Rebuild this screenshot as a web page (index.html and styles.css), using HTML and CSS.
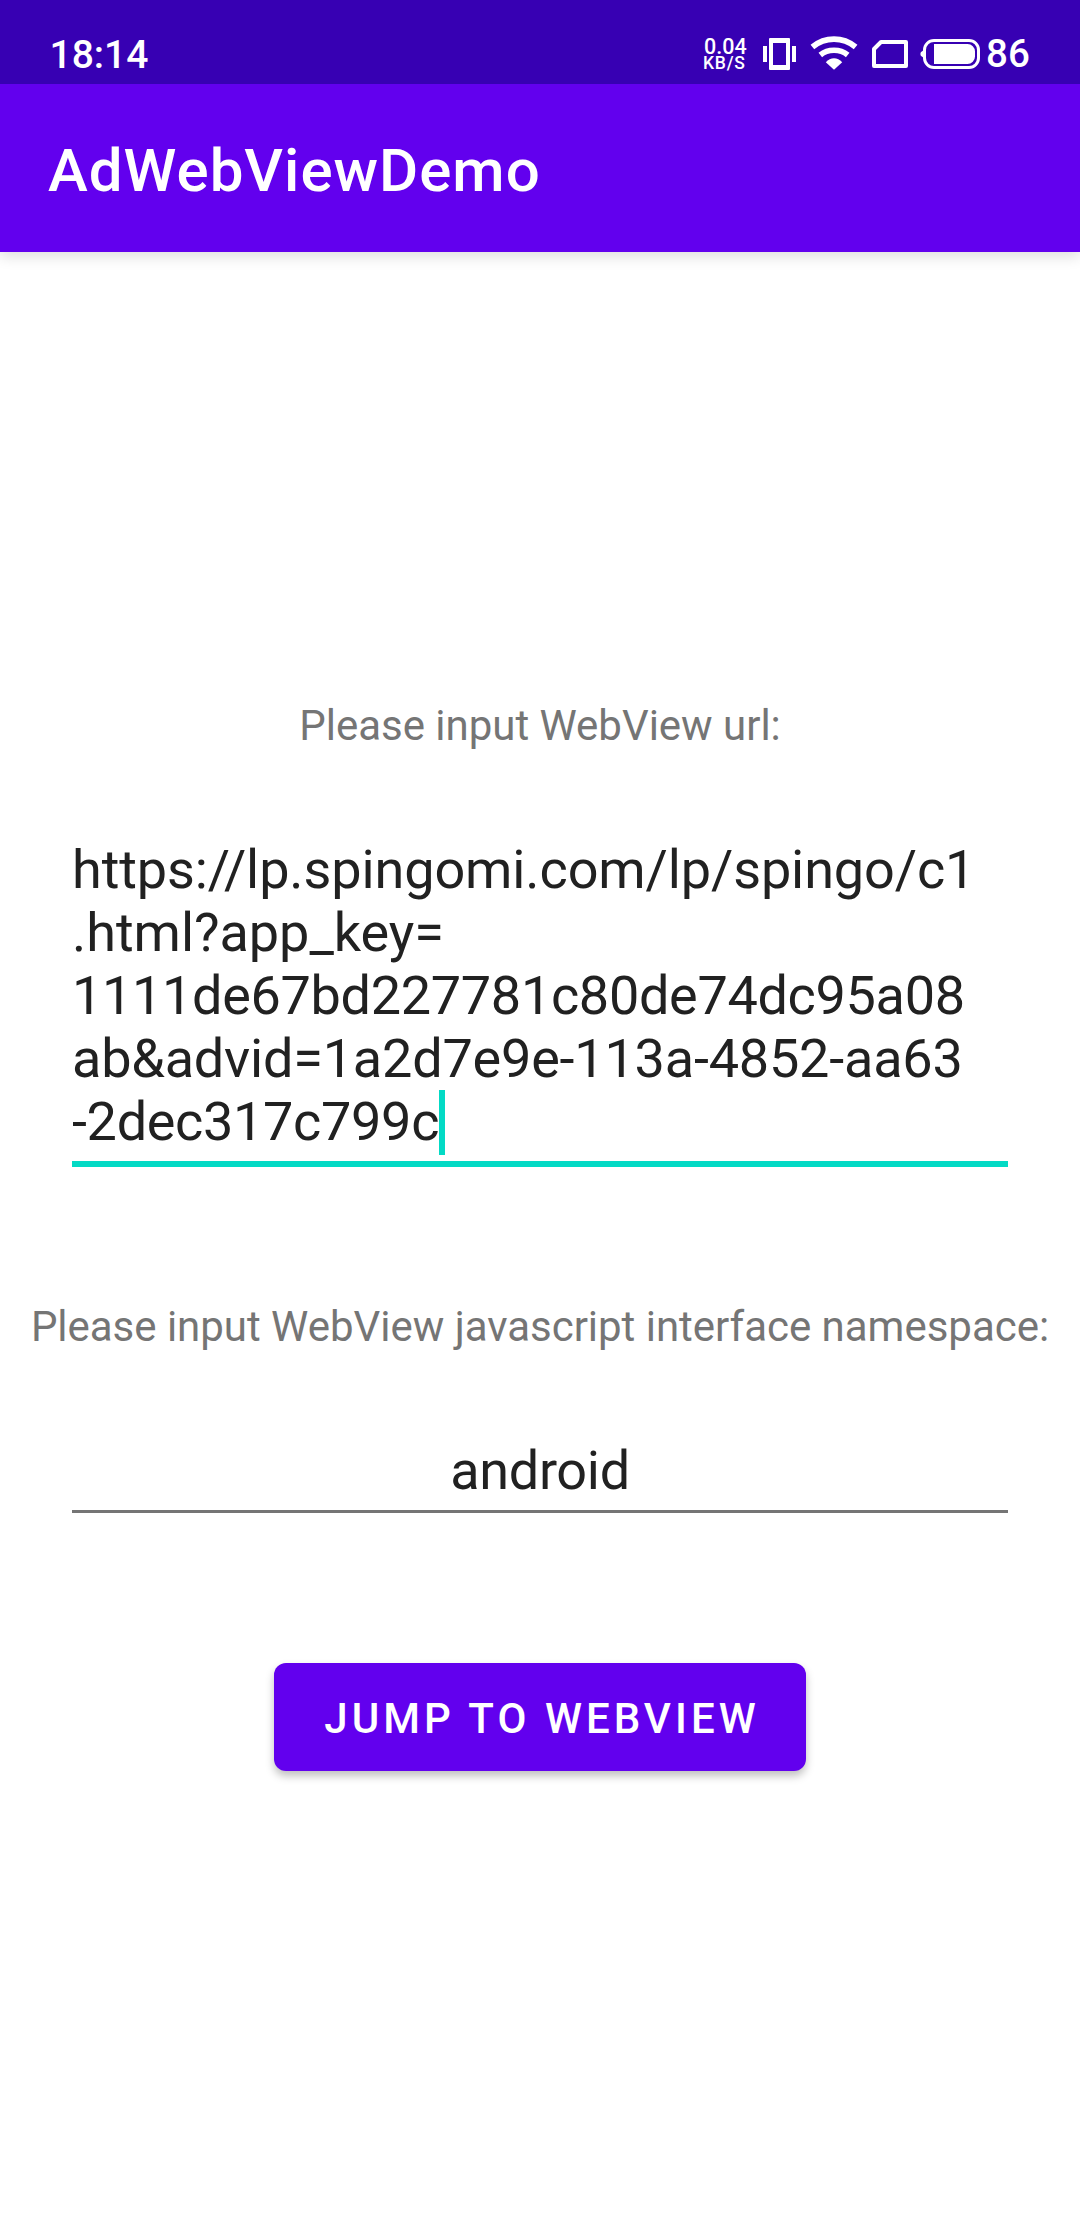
FILE: index.html
```
<!DOCTYPE html>
<html lang="en">
<head>
<meta charset="utf-8">
<title>AdWebViewDemo</title>
<link rel="stylesheet" href="styles.css">
</head>
<body>
<div class="status-bar">
  <span class="clock">18:14</span>
  <div class="net-speed">
    <span class="net-value">0.04</span>
    <span class="net-unit">KB/S</span>
  </div>
  <svg class="icon-vibrate" width="33" height="32" viewBox="0 0 33 32" fill="#fff">
    <path d="M0 8h4v16H0zM29 8h4v16h-4z"/>
    <path fill-rule="evenodd" d="M7 0h19a1 1 0 0 1 1 1v30a1 1 0 0 1-1 1H7a1 1 0 0 1-1-1V1a1 1 0 0 1 1-1zM10 5v22h13V5z"/>
  </svg>
  <svg class="icon-wifi" width="48" height="34" viewBox="0 0 48 34">
    <path d="M2.400 11Q12 3.200 24 3.200T45.600 11" fill="none" stroke="#fff" stroke-width="5.800"/>
    <path d="M10.300 19Q16 14.300 24 14.300T37.700 19" fill="none" stroke="#fff" stroke-width="5.600"/>
    <path d="M15.800 26.200Q19.500 22.300 24 22.300T32.200 26.200L24 33.700Z" fill="#fff"/>
  </svg>
  <svg class="icon-sim" width="36" height="28" viewBox="0 0 36 28">
    <path d="M9 2H34V26H2V9Z" fill="none" stroke="#fff" stroke-width="4" stroke-linejoin="round"/>
  </svg>
  <svg class="icon-battery" width="60" height="30" viewBox="0 0 60 30">
    <path d="M4.500 10.500L0.800 13.200Q0 15 .8 16.800L4.500 19.500Z" fill="#fff"/>
    <rect x="4.500" y="1.500" width="54" height="27" rx="9.500" fill="none" stroke="#fff" stroke-width="3"/>
    <path d="M14 5H47.500A7.500 7.500 0 0 1 55 12.500V17.500A7.500 7.500 0 0 1 47.500 25H14Z" fill="#fff"/>
  </svg>
  <span class="battery-level">86</span>
</div>
<header class="app-bar">
  <h1 class="app-title">AdWebViewDemo</h1>
</header>
<main class="content">
  <p class="label">Please input WebView url:</p>
  <div class="field field-focused">
    <span class="line line-host">https://lp.spingomi.com/lp/spingo/c1</span>
    <span class="line line-path">.html?app_key=</span>
    <span class="line">1111de67bd227781c80de74dc95a08</span>
    <span class="line line-advid">ab&amp;advid=1a2d7e9e-113a-4852-aa63</span>
    <span class="line">-2dec317c799c<i class="caret"></i></span>
  </div>
  <p class="label label-namespace">Please input WebView javascript interface namespace:</p>
  <div class="field field-namespace">
    <span class="line">android</span>
  </div>
  <button class="jump-button" type="button">JUMP TO WEBVIEW</button>
</main>
</body>
</html>
```
FILE: styles.css
```
* {
  box-sizing: border-box;
}

body {
  margin: 0;
  min-height: 2232px;
  background: #fff;
  font-family: Roboto, sans-serif;
  color: #212121;
}

.status-bar {
  position: relative;
  z-index: 1;
  display: flex;
  align-items: center;
  height: 84px;
  padding: 24px 49px 0 49.5px;
  background: #3700b3;
  color: #fff;
  font-weight: 500;
}

.clock {
  padding-top: 1px;
  font-size: 39px;
  line-height: 46px;
}

.net-speed {
  display: flex;
  flex-direction: column;
  width: 43px;
  margin: 1px 0 0 auto;
  line-height: 16px;
  white-space: nowrap;
}

.net-value {
  padding-left: 1px;
  font-size: 21.5px;
  line-height: 17px;
}

.net-unit {
  font-size: 17.5px;
  letter-spacing: 0.8px;
}

.icon-vibrate {
  margin-left: 17px;
}

.icon-wifi {
  margin: -3px 0 0 14px;
}

.icon-sim {
  margin-left: 14px;
}

.icon-battery {
  margin-left: 12px;
}

.battery-level {
  width: 45px;
  margin-left: 6px;
  font-size: 38.5px;
  line-height: 46px;
}

.app-bar {
  display: flex;
  align-items: center;
  height: 168px;
  padding: 6px 48px 0;
  background: #6200ee;
  box-shadow: 0 4px 14px rgba(0, 0, 0, 0.14);
}

.app-title {
  margin: 0;
  color: #fff;
  font-size: 60px;
  font-weight: 500;
  line-height: 70px;
  letter-spacing: 1px;
}

.content {
  display: flex;
  flex-direction: column;
  align-items: center;
  padding-top: 449px;
}

.label {
  margin: 0;
  color: #757575;
  font-size: 42px;
  line-height: 50px;
  letter-spacing: -0.02px;
  white-space: nowrap;
}

.field {
  display: flex;
  flex-direction: column;
  width: 936px;
  font-size: 54px;
  line-height: 63px;
  letter-spacing: -0.32px;
}

.field-focused {
  margin-top: 87px;
  padding-bottom: 8px;
  border-bottom: 6px solid #03dac5;
}

.line {
  display: flex;
  height: 63px;
}

.line-host {
  letter-spacing: -0.11px;
}

.line-path {
  letter-spacing: -0.03px;
}

.line-advid {
  letter-spacing: -0.2px;
}

.caret {
  width: 6px;
  height: 65px;
  background: #03dac5;
}

.label-namespace {
  margin-top: 135px;
}

.field-namespace {
  align-items: center;
  margin-top: 87px;
  padding-bottom: 8px;
  border-bottom: 3px solid #757575;
}

.jump-button {
  width: 532px;
  height: 108px;
  margin-top: 150px;
  padding: 3px 0 0 4px;
  border: 0;
  border-radius: 12px;
  background: #6200ee;
  box-shadow: 0 5px 8px rgba(0, 0, 0, 0.25);
  color: #fff;
  font: 500 42px/50px Roboto, sans-serif;
  letter-spacing: 4.05px;
}
```
